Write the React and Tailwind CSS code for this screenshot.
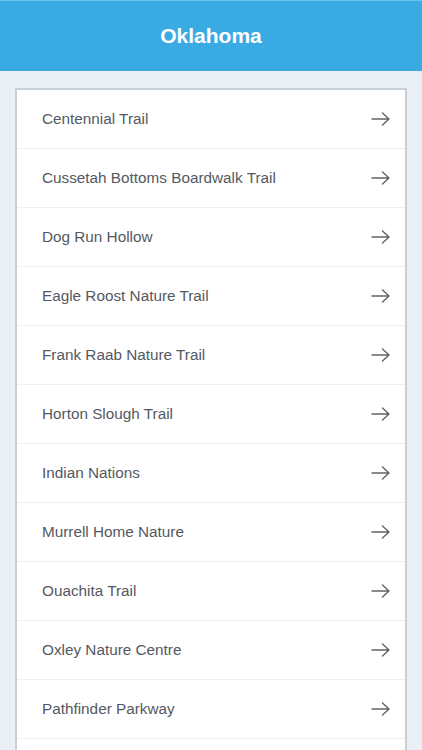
const trails = [
  'Centennial Trail',
  'Cussetah Bottoms Boardwalk Trail',
  'Dog Run Hollow',
  'Eagle Roost Nature Trail',
  'Frank Raab Nature Trail',
  'Horton Slough Trail',
  'Indian Nations',
  'Murrell Home Nature',
  'Ouachita Trail',
  'Oxley Nature Centre',
  'Pathfinder Parkway',
];

function Arrow() {
  return (
    <svg width="19" height="14" viewBox="0 0 19 14" fill="none" stroke="#5f646b" strokeWidth="1.4" strokeLinecap="round" strokeLinejoin="round">
      <path d="M1 7h17M11.5 1l6.5 6-6.5 6" />
    </svg>
  );
}

export default function App() {
  return (
    <div className="h-[750px] overflow-hidden bg-[#eaeff6]" style={{ fontFamily: 'Helvetica, "Liberation Sans", Arial, sans-serif' }}>
      {/* Header */}
      <div className="h-[71px] bg-[#3aabe2] border-t border-[#6cc3ee] flex items-center justify-center">
        <h1 className="text-white text-[21px] font-bold">Oklahoma</h1>
      </div>

      {/* List */}
      <div className="pt-[17px] px-[15px]">
        <div className="bg-white border-2 border-[#c9cfd8] border-b-0">
          {trails.map((t) => (
            <div key={t} className="h-[59px] flex items-center justify-between pl-[25px] pr-[15px] border-b border-[#edf0f3]">
              <span className="text-[15.3px] text-[#54595f]">{t}</span>
              <Arrow />
            </div>
          ))}
          <div className="h-[59px]" />
        </div>
      </div>
    </div>
  );
}
